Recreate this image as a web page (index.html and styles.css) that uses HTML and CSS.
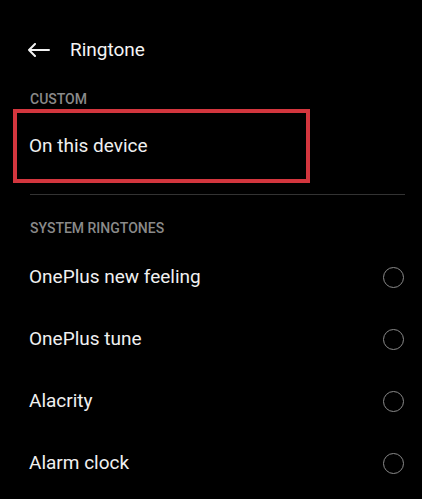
FILE: index.html
```
<!DOCTYPE html>
<html>
<head>
<meta charset="utf-8">
<link rel="stylesheet" href="styles.css">
</head>
<body>
<div class="screen">
  <div class="header">
    <svg class="back" width="23" height="14" viewBox="0 0 23 14"><path d="M22 7H2M8 1L2 7L8 13" fill="none" stroke="#f2f2f2" stroke-width="2" stroke-linecap="round" stroke-linejoin="round"/></svg>
    <span class="title">Ringtone</span>
  </div>
  <div class="label label-custom">CUSTOM</div>
  <div class="highlight"><span class="item-text">On this device</span></div>
  <div class="divider"></div>
  <div class="label label-system">SYSTEM RINGTONES</div>
  <div class="list">
    <div class="item"><span class="item-text">OnePlus new feeling</span><span class="radio"></span></div>
    <div class="item"><span class="item-text">OnePlus tune</span><span class="radio"></span></div>
    <div class="item"><span class="item-text">Alacrity</span><span class="radio"></span></div>
    <div class="item"><span class="item-text">Alarm clock</span><span class="radio"></span></div>
  </div>
</div>
</body>
</html>
```
FILE: styles.css
```
html, body {
  margin: 0;
  padding: 0;
  background: #000;
}
body {
  font-family: Roboto, "Noto Sans", sans-serif;
  color: #f2f2f2;
  width: 422px;
  height: 499px;
  overflow: hidden;
}
.screen {
  display: flex;
  flex-direction: column;
}
.header {
  margin-top: 36px;
  height: 28px;
  display: flex;
  align-items: center;
  padding-left: 27px;
}
.back {
  display: block;
}
.title {
  margin-left: 20px;
  font-size: 19px;
  line-height: 28px;
  color: #f4f4f4;
}
.label {
  font-size: 14px;
  line-height: 16px;
  height: 16px;
  font-weight: 500;
  color: #8a8a8a;
  padding-left: 30px;
}
.label-custom {
  margin-top: 27px;
}
.highlight {
  margin-top: 2px;
  margin-left: 13px;
  width: 297px;
  height: 74px;
  box-sizing: border-box;
  border: 4px solid #d3363e;
  display: flex;
  align-items: center;
  padding-left: 12px;
}
.item-text {
  font-size: 19px;
  line-height: 24px;
  color: #f0f0f0;
}
.divider {
  margin: 11px 17px 0 30px;
  height: 1px;
  background: #333;
}
.label-system {
  margin-top: 25px;
}
.list {
  margin-top: 10px;
  display: flex;
  flex-direction: column;
}
.item {
  height: 62px;
  display: flex;
  align-items: center;
  justify-content: space-between;
  padding: 0 18px 0 29px;
}
.radio {
  width: 21px;
  height: 21px;
  box-sizing: border-box;
  border: 1.5px solid #8a8a8a;
  border-radius: 50%;
}
```
